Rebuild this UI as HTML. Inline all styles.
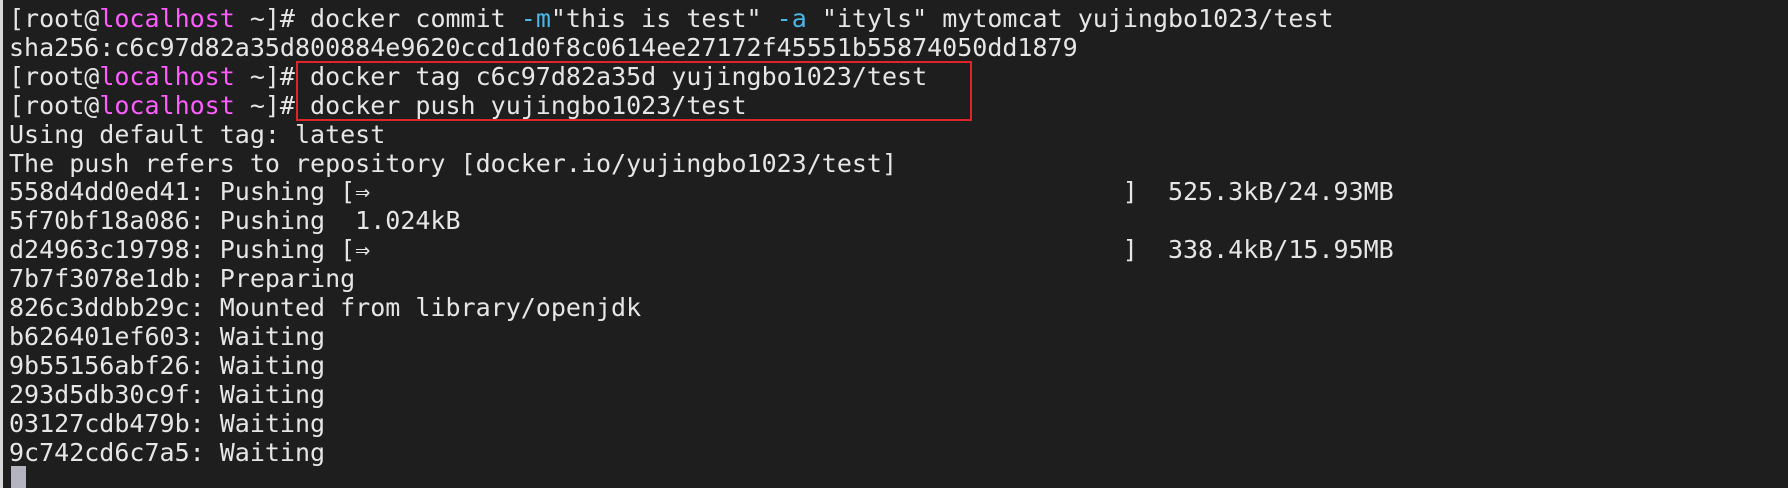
<!DOCTYPE html>
<html><head><meta charset="utf-8"><style>
html,body{margin:0;padding:0;}
body{width:1788px;height:488px;background:#1e1e1e;overflow:hidden;position:relative;}
.lb{position:absolute;left:0;top:0;width:3px;height:488px;background:#d8d8d8;}
pre{position:absolute;left:9px;top:5px;margin:0;font-family:"DejaVu Sans Mono","Liberation Mono",monospace;font-size:25px;line-height:28.9px;color:#e6e6e6;white-space:pre;}
.m{color:#ff5cff;}
.c{color:#49b8e8;}
.box{position:absolute;left:296px;top:61px;width:672px;height:56px;border:2px solid #e0242a;}
.cur{position:absolute;left:11px;top:466px;width:15px;height:22px;background:#b4b4c0;}
</style></head><body>
<div class="lb"></div>
<pre>[root@<span class="m">localhost</span> ~]# docker commit <span class="c">-m</span>"this is test" <span class="c">-a</span> "ityls" mytomcat yujingbo1023/test
sha256:c6c97d82a35d800884e9620ccd1d0f8c0614ee27172f45551b55874050dd1879
[root@<span class="m">localhost</span> ~]# docker tag c6c97d82a35d yujingbo1023/test
[root@<span class="m">localhost</span> ~]# docker push yujingbo1023/test
Using default tag: latest
The push refers to repository [docker.io/yujingbo1023/test]
558d4dd0ed41: Pushing [⇒                                                  ]  525.3kB/24.93MB
5f70bf18a086: Pushing  1.024kB
d24963c19798: Pushing [⇒                                                  ]  338.4kB/15.95MB
7b7f3078e1db: Preparing
826c3ddbb29c: Mounted from library/openjdk
b626401ef603: Waiting
9b55156abf26: Waiting
293d5db30c9f: Waiting
03127cdb479b: Waiting
9c742cd6c7a5: Waiting</pre>
<div class="box"></div>
<div class="cur"></div>
</body></html>
